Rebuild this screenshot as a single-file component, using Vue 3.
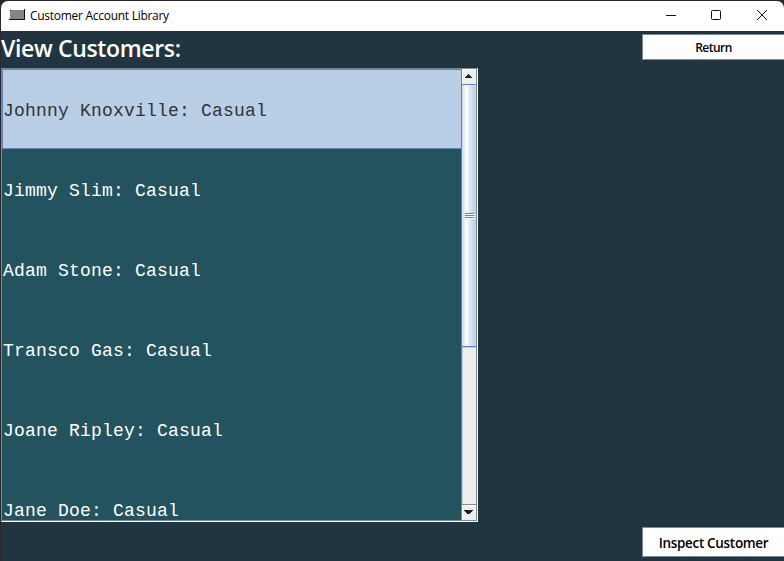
<script setup>
import { ref } from 'vue'

const customers = [
  'Johnny Knoxville: Casual',
  'Jimmy Slim: Casual',
  'Adam Stone: Casual',
  'Transco Gas: Casual',
  'Joane Ripley: Casual',
  'Jane Doe: Casual',
]
const selected = ref(0)
</script>

<template>
  <div class="desktop">
    <div class="window">
      <header class="titlebar">
        <svg class="app-icon" width="16" height="11" viewBox="0 0 16 11" shape-rendering="crispEdges">
          <path d="M15 0h1v11H0v-1h1V1h14z" fill="#111" />
          <path d="M2 1h13v9H1V2h1z" fill="#858585" />
          <path d="M1 2h2v7H1z" fill="#a87a66" />
          <path d="M3 7h1v1H3zM12 2h1v1h-1z" fill="#555" />
        </svg>
        <span class="title">Customer Account Library</span>
        <svg class="controls" width="110" height="30" viewBox="0 0 110 30" fill="none" stroke="#111">
          <path d="M0 14.5h10" />
          <rect x="45.5" y="9.5" width="9" height="9" rx="1" />
          <path d="M91 9l10 10M101 9l-10 10" />
        </svg>
      </header>
      <main class="content">
        <section class="left">
          <h1 class="heading">View Customers:</h1>
          <div class="scrollpane">
            <ul class="list">
              <li
                v-for="(c, i) in customers"
                :key="c"
                class="cell"
                :class="{ selected: i === selected }"
                @click="selected = i"
              >{{ c }}</li>
            </ul>
            <div class="scrollbar">
              <div class="arrow up">
                <svg width="9" height="5" viewBox="0 0 9 5" shape-rendering="crispEdges">
                  <path d="M4 0h1v1h1v1h1v1h1v1H1V3h1V2h1V1h1z" fill="#222" />
                </svg>
              </div>
              <div class="thumb"><i></i><i></i><i></i></div>
              <div class="track"></div>
              <div class="arrow down">
                <svg width="9" height="5" viewBox="0 0 9 5" shape-rendering="crispEdges">
                  <path d="M0 0h9v1H8v1H7v1H6v1H3V3H2V2H1V1H0z" fill="#222" />
                </svg>
              </div>
            </div>
          </div>
        </section>
        <aside class="right">
          <button class="btn return"><span>Return</span></button>
          <button class="btn inspect"><span>Inspect Customer</span></button>
        </aside>
      </main>
    </div>
  </div>
</template>

<style>
body {
  margin: 0;
  overflow: hidden;
}
</style>

<style scoped>
.desktop {
  box-sizing: border-box;
  width: 784px;
  height: 561px;
  padding: 1px 0 0 1px;
  background: #2b2729;
  font-family: "Open Sans", "Noto Sans", sans-serif;
}
.window {
  height: 560px;
  display: flex;
  flex-direction: column;
  border-radius: 7px 7px 0 0;
  overflow: hidden;
  background: #213540;
}
.titlebar {
  flex: none;
  height: 30px;
  display: flex;
  align-items: center;
  background: #fff;
}
.app-icon {
  margin: 0 5px 3px 8px;
}
.title {
  font-size: 12px;
  line-height: 16px;
  letter-spacing: -0.28px;
  color: #000;
}
.controls {
  margin: 0 8px 0 auto;
}
.content {
  flex: 1;
  display: flex;
  justify-content: space-between;
}
.left {
  width: 477px;
}
.heading {
  margin: 0;
  height: 37px;
  font-size: 23px;
  line-height: 35px;
  font-weight: 600;
  letter-spacing: -0.35px;
  white-space: nowrap;
  color: #fff;
}
.scrollpane {
  box-sizing: border-box;
  width: 477px;
  height: 454px;
  display: flex;
  border: 1px solid #7a8a99;
  border-right-color: #fff;
  border-bottom-color: #fff;
  box-shadow: inset -1px -1px #7a8a99;
  padding: 0 1px 1px 0;
}
.list {
  width: 460px;
  margin: 0;
  padding: 0;
  overflow: hidden;
  list-style: none;
  background: #23535e;
}
.cell {
  box-sizing: border-box;
  height: 80px;
  padding: 2px 0 0;
  border: 1px solid transparent;
  font-family: "Courier New", "Liberation Mono", monospace;
  font-size: 18px;
  letter-spacing: 0.198px;
  line-height: 78px;
  white-space: pre;
  color: #fff;
}
.cell.selected {
  background: #b8cfe5;
  border-color: #6382bf;
  color: #333;
}
.scrollbar {
  box-sizing: border-box;
  width: 14px;
  display: flex;
  flex-direction: column;
  background: #eee;
  box-shadow: -1px 0 #6382bf;
}
.arrow {
  box-sizing: border-box;
  height: 15px;
  padding: 0 2px 2px 0;
  display: flex;
  justify-content: center;
  align-items: center;
  background: #eee;
  border-top: 1px solid #fff;
  border-left: 1px solid #fff;
}
.thumb {
  box-sizing: border-box;
  height: 263px;
  padding-bottom: 1px;
  display: flex;
  flex-direction: column;
  justify-content: center;
  align-items: center;
  gap: 1px;
  border-top: 1px solid #6382bf;
  border-bottom: 1px solid #6382bf;
  background: linear-gradient(90deg, #c8daec 0, #fff 32%, #dce8f3 55%, #b8cfe5 100%);
}
.thumb i {
  width: 9px;
  height: 1px;
  background: #6382bf;
  box-shadow: 1px 1px #fff;
}
.track {
  flex: 1;
  box-shadow: inset 1px 1px #b8cfe5;
  border-bottom: 1px solid #7a8a99;
}
.right {
  width: 142px;
  display: flex;
  flex-direction: column;
  justify-content: space-between;
  padding: 3px 0 4px;
}
.btn {
  box-sizing: border-box;
  width: 142px;
  padding: 0;
  display: flex;
  justify-content: center;
  align-items: center;
  border: 1px solid #7a8a99;
  border-right: 0;
  background: #fff;
  color: #000;
  font-family: inherit;
  font-weight: 600;
  white-space: nowrap;
}
.return {
  height: 26px;
  font-size: 12px;
  letter-spacing: -0.5px;
}
.inspect {
  height: 30px;
  padding-top: 2px;
  font-size: 13.5px;
  letter-spacing: -0.32px;
}
</style>
